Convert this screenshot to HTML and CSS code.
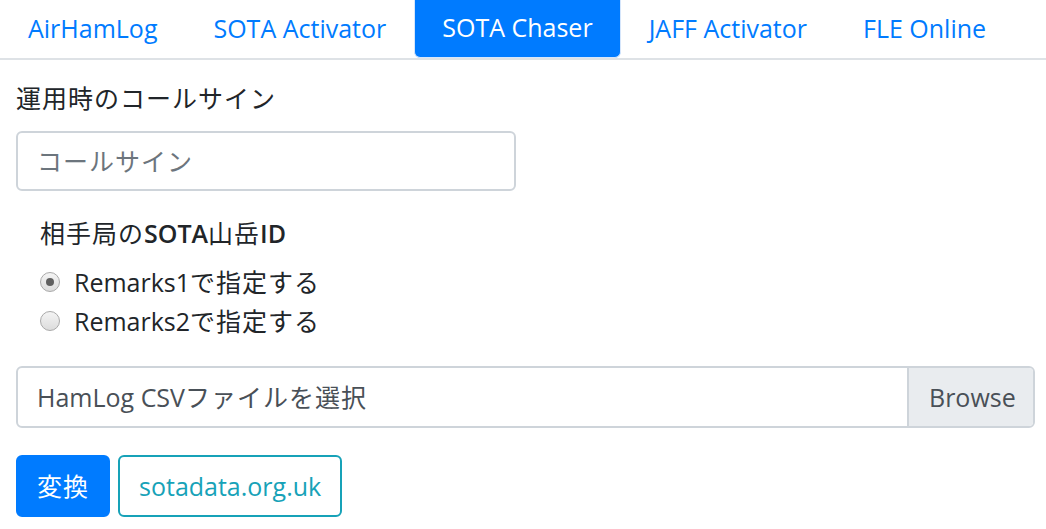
FILE: index.html
```html
<!DOCTYPE html>
<html lang="ja">
<head>
<meta charset="utf-8">
<title>SOTA Chaser</title>
<link rel="stylesheet" href="styles.css">
</head>
<body>
<nav class="tabs">
  <a class="tab" href="#">AirHamLog</a>
  <a class="tab" href="#">SOTA Activator</a>
  <a class="tab active" href="#">SOTA Chaser</a>
  <a class="tab" href="#">JAFF Activator</a>
  <a class="tab" href="#">FLE Online</a>
</nav>
<main class="content">
  <div class="field">
    <label class="label ja" for="call">運用時のコールサイン</label>
    <input class="input" id="call" type="text" placeholder="コールサイン">
  </div>
  <fieldset class="group">
    <legend class="legend"><span class="ja">相手局の</span><b class="strong">SOTA</b><span class="ja">山岳</span><b class="strong">ID</b></legend>
    <label class="radio"><input class="radio-input" type="radio" name="remarks" checked><span class="radio-text">Remarks1<span class="ja">で指定する</span></span></label>
    <label class="radio"><input class="radio-input" type="radio" name="remarks"><span class="radio-text">Remarks2<span class="ja">で指定する</span></span></label>
  </fieldset>
  <div class="file">
    <span class="file-name">HamLog CSV<span class="ja">ファイルを選択</span></span>
    <span class="file-browse">Browse</span>
  </div>
  <div class="actions">
    <button class="btn btn-primary" type="button"><span class="ja">変換</span></button>
    <a class="btn btn-outline" href="#">sotadata.org.uk</a>
  </div>
</main>
</body>
</html>
```
FILE: styles.css
```css
* { box-sizing: border-box; }
html, body { margin: 0; padding: 0; background: #fff; }
body {
  font-family: "Open Sans", "Noto Sans CJK JP", sans-serif;
  font-size: 25px;
  line-height: 36px;
  color: #212529;
}
.ja { letter-spacing: 1px; }

.tabs {
  display: flex;
  height: 60px;
  border-bottom: 2px solid #dee2e6;
}
.tab {
  display: block;
  height: 58px;
  padding: 9px 27px;
  color: #007bff;
  text-decoration: none;
  border: 1px solid transparent;
  border-radius: 0 0 6px 6px;
}
.tab.active {
  background: #007bff;
  color: #fff;
  border-color: #d6e6fb;
  border-top: 0;
}

.content {
  padding: 0 11px 0 16px;
}
.field {
  padding-top: 20px;
  margin-bottom: 24px;
}
.label {
  display: block;
  margin-bottom: 15px;
}
.input {
  display: block;
  width: 500px;
  height: 60px;
  padding: 0 18px 0 19px;
  font: inherit;
  color: #495057;
  background: #fff;
  border: 2px solid #ced4da;
  border-radius: 6px;
}
.input::placeholder { color: #6c757d; letter-spacing: 1px; }

.group {
  margin: 0;
  padding: 3px 0 0 24px;
  border: 0;
}
.legend {
  padding: 0;
  margin-bottom: 8px;
}
.strong { font-weight: 600; }
.radio {
  display: flex;
  align-items: center;
  height: 39px;
}
.radio-input {
  appearance: none;
  -webkit-appearance: none;
  width: 20px;
  height: 20px;
  margin: 0 14px 0 0;
  border: 1px solid #a9a9a9;
  border-radius: 50%;
  background: linear-gradient(#f4f4f4, #dcdcdc);
  position: relative;
}
.radio-input:checked::after {
  content: "";
  position: absolute;
  left: 5px;
  top: 5px;
  width: 8px;
  height: 8px;
  border-radius: 50%;
  background: #5f5f5f;
}

.file {
  display: flex;
  height: 62px;
  margin-top: 26px;
  border: 2px solid #ced4da;
  border-radius: 6px;
  overflow: hidden;
  color: #495057;
}
.file-name {
  flex: 1;
  padding: 11px 19px;
}
.file-browse {
  width: 126px;
  padding: 11px 20px;
  background: #e9ecef;
  border-left: 2px solid #ced4da;
}

.actions {
  display: flex;
  gap: 8px;
  margin-top: 27px;
}
.btn {
  display: block;
  height: 62px;
  padding: 11px 19px;
  font: inherit;
  line-height: 36px;
  border-radius: 6px;
  text-decoration: none;
  cursor: pointer;
}
.btn-primary {
  color: #fff;
  background: #007bff;
  border: 2px solid #007bff;
}
.btn-outline {
  color: #17a2b8;
  background: #fff;
  border: 2px solid #17a2b8;
}
```
